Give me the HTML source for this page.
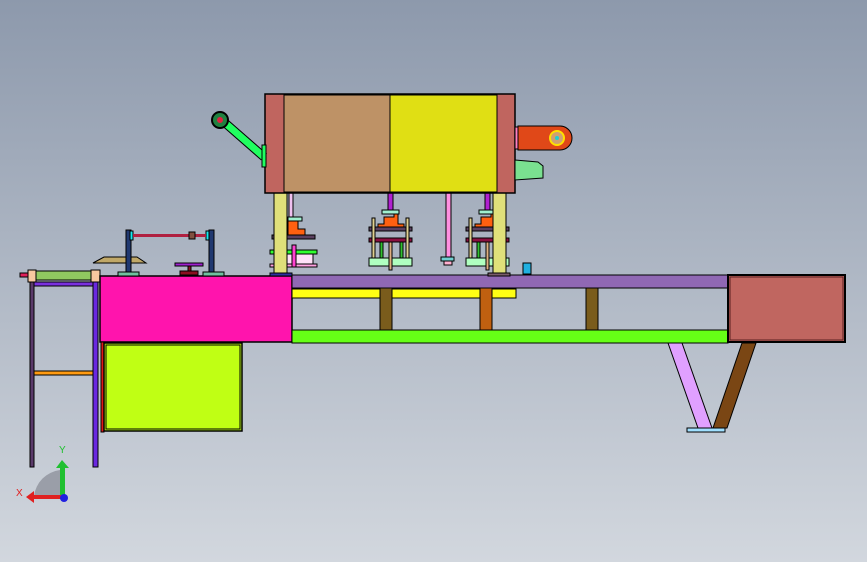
<!DOCTYPE html><html><head><style>html,body{margin:0;padding:0;overflow:hidden}body{width:867px;height:562px;background:linear-gradient(#8d99ac,#d2d7de)}svg{display:block}</style></head><body>
<svg width="867" height="562" viewBox="0 0 867 562" xmlns="http://www.w3.org/2000/svg" stroke="#000" stroke-width="1">
<rect x="30" y="282" width="4" height="185" fill="#5a3a6a"/>
<rect x="93" y="282" width="5" height="185" fill="#6a28e0"/>
<rect x="34" y="371" width="59" height="4" fill="#ff9a10"/>
<rect x="34" y="282" width="59" height="4" fill="#7a30e0"/>
<rect x="20" y="273" width="10" height="4" fill="#e0205a"/>
<rect x="28" y="270" width="8" height="12" fill="#f8c8a0"/>
<rect x="36" y="271" width="55" height="9" fill="#90c860"/>
<rect x="91" y="270" width="9" height="12" fill="#f8c8a0"/>
<rect x="100" y="276" width="192" height="66" fill="#ff14ad" stroke-width="1.5"/>
<rect x="101" y="342" width="3" height="90" fill="#e01818"/>
<rect x="104" y="343" width="138" height="88" fill="#c0ff14" stroke-width="1.5"/>
<rect x="106" y="345" width="134" height="84" fill="none"/>
<polygon points="93,263 104,257 137,257 146,263" fill="#c0a868"/>
<rect x="126" y="230" width="5" height="43" fill="#203870"/>
<rect x="209" y="230" width="5" height="43" fill="#203870"/>
<rect x="130" y="231" width="3" height="9" fill="#18e8f0"/>
<rect x="206" y="231" width="3" height="9" fill="#18e8f0"/>
<rect x="133" y="234" width="73" height="3" fill="#b02040" stroke="none"/>
<rect x="189" y="232" width="6" height="7" fill="#805040"/>
<rect x="118" y="272" width="21" height="4" fill="#70c0a0"/>
<rect x="203" y="272" width="21" height="4" fill="#70c0a0"/>
<rect x="175" y="263" width="28" height="3" fill="#a020d0"/>
<rect x="188" y="266" width="3" height="5" fill="#8a1020"/>
<rect x="180" y="271" width="18" height="4" fill="#8a1020"/>
<rect x="292" y="275" width="436" height="13" fill="#9068b4"/>
<rect x="292" y="289" width="224" height="9" fill="#ffff14"/>
<rect x="380" y="288" width="12" height="42" fill="#7a5c1c"/>
<rect x="480" y="288" width="12" height="42" fill="#c06010"/>
<rect x="586" y="288" width="12" height="42" fill="#7a5c1c"/>
<rect x="292" y="330" width="436" height="13" fill="#66ff16"/>
<rect x="728" y="275" width="117" height="67" fill="#c06660" stroke-width="2"/>
<rect x="730" y="277" width="113" height="63" fill="none" stroke="#5a2020"/>
<polygon points="668,343 682,343 712,428 698,428" fill="#e0a0ff"/>
<polygon points="742,343 756,343 727,428 713,428" fill="#7a4614"/>
<rect x="687" y="428" width="38" height="4" fill="#a0e0ff"/>
<g id="p">
<rect x="388" y="193" width="5" height="18" fill="#b020d0"/>
<rect x="382" y="210" width="17" height="4" fill="#a0f0d0"/>
<polygon points="378,224 384,224 384,217 394,217 394,214 398,214 398,224 404,224 404,228 378,228" fill="#ff6010"/>
<rect x="369" y="227" width="43" height="4" fill="#5a4060"/>
<rect x="369" y="238" width="43" height="4" fill="#8a1040"/>
<rect x="372" y="218" width="3" height="40" fill="#e0d090"/>
<rect x="406" y="218" width="3" height="40" fill="#e0d090"/>
<rect x="380" y="242" width="3" height="16" fill="#30c030"/>
<rect x="400" y="242" width="3" height="16" fill="#30c030"/>
<rect x="369" y="258" width="43" height="8" fill="#b0ffc0"/>
<rect x="389" y="242" width="3" height="28" fill="#e0b080"/>
</g>
<use href="#p" x="97"/>
<rect x="289" y="193" width="4" height="25" fill="#f0c0f0"/>
<rect x="288" y="217" width="14" height="4" fill="#a0f0d0"/>
<polygon points="288,221 298,221 298,229 305,229 305,235 288,235" fill="#ff6010"/>
<rect x="272" y="235" width="43" height="4" fill="#5a4060"/>
<rect x="270" y="250" width="47" height="4" fill="#30ff30"/>
<rect x="286" y="254" width="27" height="10" fill="#ffe0f8"/>
<rect x="270" y="264" width="47" height="3" fill="#ffa0e0"/>
<rect x="292" y="245" width="4" height="22" fill="#ff40d0"/>
<rect x="446" y="193" width="5" height="65" fill="#ff90e0"/>
<rect x="441" y="257" width="13" height="4" fill="#70d0d0"/>
<rect x="444" y="261" width="8" height="4" fill="#ffb0d0"/>
<rect x="523" y="263" width="8" height="11" fill="#20b0e0"/>
<rect x="274" y="193" width="13" height="80" fill="#e0e07a"/>
<rect x="493" y="193" width="13" height="80" fill="#e0e07a"/>
<rect x="270" y="273" width="22" height="3" fill="#3030a0"/>
<rect x="488" y="273" width="22" height="3" fill="#7a5c6c"/>
<rect x="265" y="94" width="250" height="99" fill="#c0655f" stroke-width="1.5"/>
<rect x="284" y="95" width="106" height="97" fill="#be9266"/>
<rect x="390" y="95" width="107" height="97" fill="#e0df14"/>
<line x1="224" y1="122" x2="264" y2="157" stroke="#000" stroke-width="9"/>
<line x1="224" y1="122" x2="264" y2="157" stroke="#20ff60" stroke-width="7"/>
<rect x="262" y="145" width="4" height="22" fill="#20ff60"/>
<circle cx="220" cy="120" r="8" fill="#208040" stroke-width="2"/>
<circle cx="220" cy="120" r="3" fill="#e02040" stroke="none"/>
<rect x="515" y="127" width="3" height="22" fill="#ff80c0"/>
<path d="M518 126 H560 A12 12 0 0 1 560 150 H518 Z" fill="#e04818"/>
<circle cx="557" cy="138" r="7" fill="#d0a070" stroke="#ffe000" stroke-width="2"/>
<circle cx="557" cy="138" r="2" fill="#20d0d0" stroke="none"/>
<polygon points="515,160 538,162 543,166 543,178 515,180" fill="#7ae090"/>
<path d="M34 496 A30 30 0 0 1 60 470 V496 Z" fill="#9a9ea8" stroke="none"/>
<rect x="60" y="467" width="5" height="30" fill="#20c030" stroke="none"/>
<polygon points="56,468 62,460 69,468" fill="#20c030" stroke="none"/>
<rect x="33" y="495" width="30" height="4" fill="#e02020" stroke="none"/>
<polygon points="34,491 26,497 34,503" fill="#e02020" stroke="none"/>
<circle cx="64" cy="498" r="4" fill="#2020e0" stroke="none"/>
<text x="59" y="453" font-family="Liberation Sans" font-size="10" fill="#20c030" stroke="none">Y</text>
<text x="16" y="496" font-family="Liberation Sans" font-size="10" fill="#e02020" stroke="none">X</text>
</svg>
</body></html>
